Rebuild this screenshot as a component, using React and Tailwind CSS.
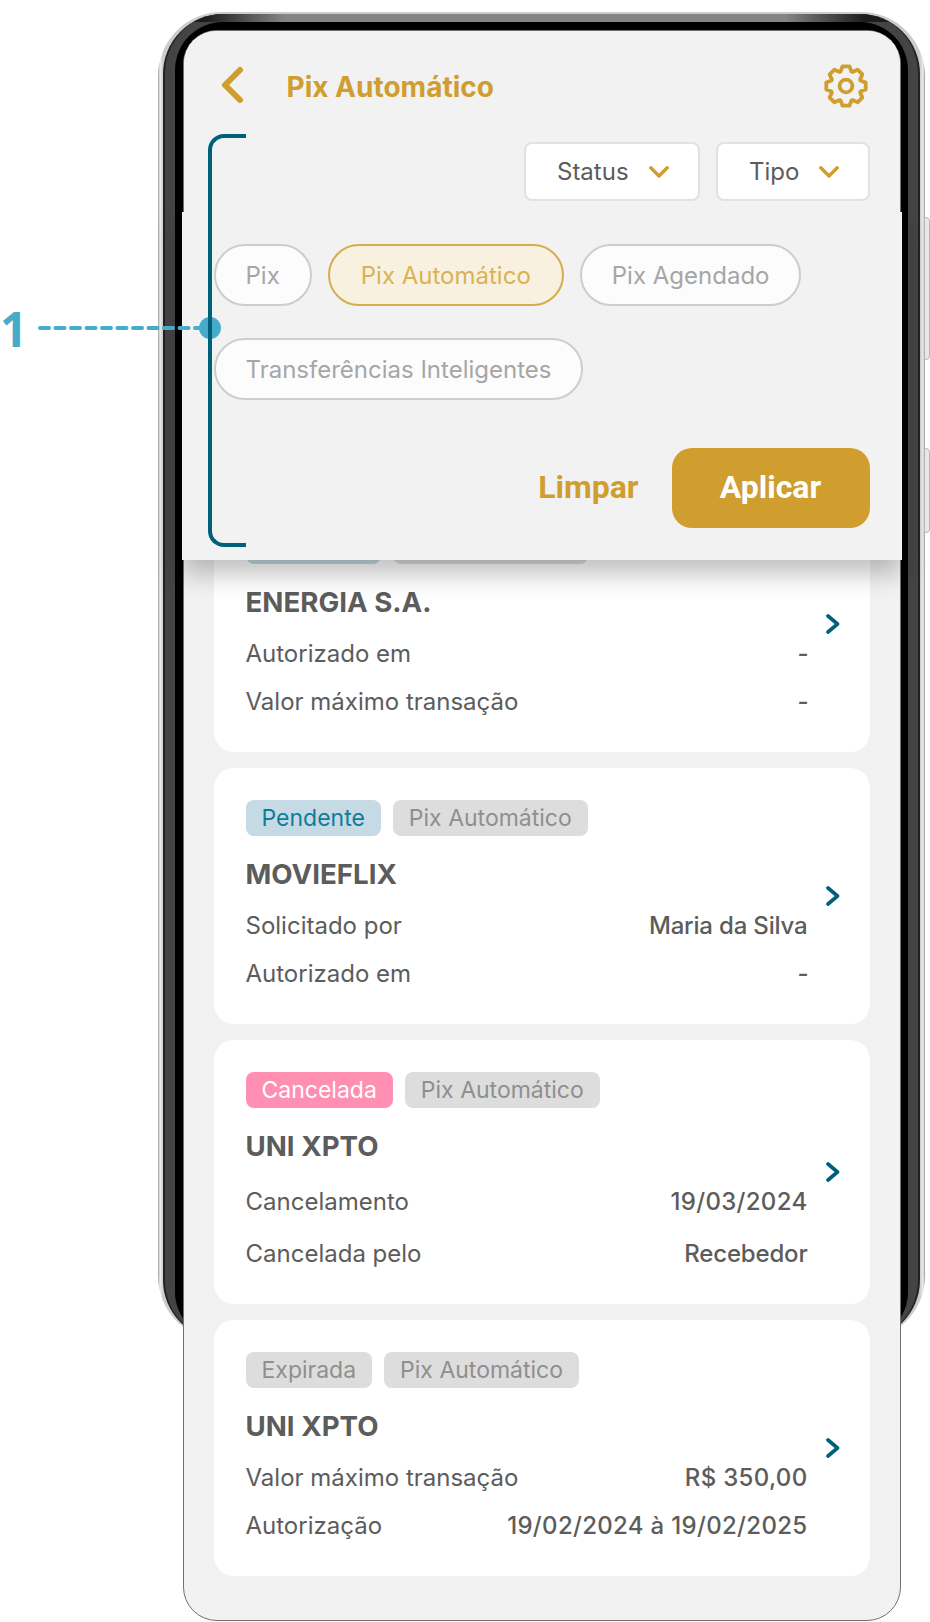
const gold = '#CF9E2E';

// 8 tooth gear outline, drawn around 22,22 in a 44 box
const gearPoints = () => {
  const pts = [];
  for (let i = 0; i < 8; i++) {
    const a = (i * Math.PI) / 4 - Math.PI / 2;
    [[-0.36, 15.5], [-0.17, 20], [0.17, 20], [0.36, 15.5]].forEach(([d, r]) => {
      pts.push(`${(22 + r * Math.cos(a + d)).toFixed(2)},${(22 + r * Math.sin(a + d)).toFixed(2)}`);
    });
  }
  return pts.join(' ');
};

function Gear() {
  return (
    <svg width="44" height="44" viewBox="0 0 44 44" fill="none" stroke={gold} strokeWidth="3.8" strokeLinejoin="round">
      <polygon points={gearPoints()} />
      <circle cx="22" cy="22" r="6.4" />
    </svg>
  );
}

function DownChevron() {
  return (
    <svg width="20" height="12" viewBox="0 0 20 12" fill="none" stroke={gold} strokeWidth="3.4" strokeLinecap="round" strokeLinejoin="round">
      <path d="M1.8 1.8L10 10L18.2 1.8" />
    </svg>
  );
}

function RightChevron() {
  return (
    <svg className="shrink-0" width="14" height="20" viewBox="0 0 14 20" fill="none" stroke="#00607A" strokeWidth="3.6" strokeLinecap="round" strokeLinejoin="round">
      <path d="M2 2L11.5 10L2 18" />
    </svg>
  );
}

function FilterSelect({ label, className }) {
  return (
    <div className={`flex h-[59px] items-center gap-5 rounded-lg border-2 border-[#E2E2E2] bg-white pl-[31px] text-2xl text-[#5C5C5C] ${className}`}>
      <span>{label}</span>
      <DownChevron />
    </div>
  );
}

function Pill({ label, active }) {
  return (
    <div
      className={
        active
          ? 'flex h-[62px] items-center rounded-full border-2 border-[#D6AC50] bg-[#F9F1E0] px-[31px] pt-[3px] text-2xl text-[#D9B256]'
          : 'flex h-[62px] items-center rounded-full border-2 border-[#CDCDCD] bg-[#FCFCFC] px-[30px] pt-[3px] text-2xl text-[#A6A6A6]'
      }
    >
      {label}
    </div>
  );
}

function Badge({ label, className }) {
  return <span className={`flex h-9 items-center rounded-lg px-4 pt-[2px] text-[23px] ${className}`}>{label}</span>;
}

function Row({ label, value }) {
  // dates and amounts sit a little wider than names in the reference
  let valueClass = 'font-medium tracking-[-0.18px]';
  if (/\d/.test(value)) valueClass = 'font-medium tracking-[0.32px]';
  if (value === '-') valueClass = 'font-medium -mr-px';
  return (
    <div className="flex h-8 items-center justify-between text-2xl text-[#5C5C5C]">
      <span>{label}</span>
      <span className={valueClass}>{value}</span>
    </div>
  );
}

function Card({ badge, badgeClass, title, rows, tall }) {
  return (
    <div className={tall ? 'flex h-[264px] items-center rounded-[20px] bg-white pl-8 pr-[29px]' : 'flex h-[256px] items-center rounded-[20px] bg-white pl-8 pr-[29px]'}>
      <div className="flex h-full w-[562px] flex-col pt-8">
        <div className="flex gap-3">
          <Badge label={badge} className={badgeClass} />
          <Badge label="Pix Automático" className="bg-[#DDDDDD] text-[#8F8F8F]" />
        </div>
        <div className="mt-5 text-[27.7px] leading-9 font-bold text-[#5C5C5C]">{title}</div>
        <div className={tall ? 'mt-[22px] flex flex-col gap-5' : 'mt-[18px] flex flex-col gap-4'}>
          {rows.map((r) => (
            <Row key={r[0]} label={r[0]} value={r[1]} />
          ))}
        </div>
      </div>
      <div className="ml-[18px]">
        <RightChevron />
      </div>
    </div>
  );
}

export default function App() {
  return (
    <div className="relative h-[1622px] w-[930px] overflow-hidden bg-white font-[Inter,sans-serif]">
      {/* Phone body, the screen runs on past its bottom edge */}
      <div className="ml-[158px] mt-3 h-[1328px] w-[767px] rounded-[64px] bg-[linear-gradient(90deg,#999999_0,#EEEEEE_2px,#CCCCCC_5px,#CCCCCC_762px,#EEEEEE_765px,#999999_767px)] px-[5px] pt-[2px]">
        <div className="h-full rounded-[60px] border-x-2 border-[#222222] bg-[linear-gradient(90deg,#1C1C1C_40px,#858585_120px,#858585_620px,#1C1C1C_700px),linear-gradient(#444444,#444444)] bg-[length:100%_8px,100%_100%] bg-no-repeat px-[10px] pt-2">
          <div className="h-full rounded-[48px] bg-black px-2 pt-2">
            <div className="relative h-[1591px] w-[718px] rounded-[34px] border-[1.5px] border-[#707070] bg-[#F2F2F2]">
              {/* Title and selects */}
              <div className="relative z-20 h-[180.5px] rounded-t-[32px] bg-[#F2F2F2]">
                <div className="flex h-[111px] items-start justify-between pl-[36.5px] pr-8 pt-[33px]">
                  <div className="flex h-[42px] items-center">
                    <svg width="24" height="38" viewBox="0 0 24 38" fill="none" stroke={gold} strokeWidth="6" strokeLinecap="round" strokeLinejoin="round">
                      <path d="M19 4L4 19L19 34" />
                    </svg>
                    <span className="ml-[42px] pt-[3px] text-[28px] font-bold text-[#CF9E2E]">Pix Automático</span>
                  </div>
                  <Gear />
                </div>
                <div className="flex justify-end gap-4 pr-[30px]">
                  <FilterSelect label="Status" className="w-[176px]" />
                  <FilterSelect label="Tipo" className="w-[154px]" />
                </div>
              </div>

              {/* Filter panel */}
              <div className="relative z-10 -mx-[2px] h-[348px] bg-[#F2F2F2] pl-[31.5px] pr-[32.5px] pt-8 shadow-[0_14px_24px_rgba(0,0,0,0.25)]">
                <div className="flex flex-wrap gap-x-4 gap-y-8">
                  <Pill label="Pix" />
                  <Pill label="Pix Automático" active />
                  <Pill label="Pix Agendado" />
                  <Pill label="Transferências Inteligentes" />
                </div>
                <div className="mt-12 flex items-center justify-end gap-[33px] font-['Roboto',sans-serif] text-[32px] font-bold">
                  <span className="pb-[2px] text-[#CF9E2E]">Limpar</span>
                  <div className="flex h-20 w-[198px] items-center justify-center rounded-[20px] bg-[#CF9E2E] pb-[2px] text-white">Aplicar</div>
                </div>
              </div>

              {/* Authorisation list, first card slides under the panel */}
              <div className="-mt-16 flex flex-col gap-4 pl-[29.5px] pr-[30.5px]">
                <Card
                  badge="Pendente"
                  badgeClass="bg-[#C5DAE4] text-[#0F7C9C]"
                  title="ENERGIA S.A."
                  rows={[['Autorizado em', '-'], ['Valor máximo transação', '-']]}
                />
                <Card
                  badge="Pendente"
                  badgeClass="bg-[#C5DAE4] text-[#0F7C9C]"
                  title="MOVIEFLIX"
                  rows={[['Solicitado por', 'Maria da Silva'], ['Autorizado em', '-']]}
                />
                <Card
                  tall
                  badge="Cancelada"
                  badgeClass="bg-[#FF8FB3] text-white"
                  title="UNI XPTO"
                  rows={[['Cancelamento', '19/03/2024'], ['Cancelada pelo', 'Recebedor']]}
                />
                <Card
                  badge="Expirada"
                  badgeClass="bg-[#DDDDDD] text-[#8F8F8F]"
                  title="UNI XPTO"
                  rows={[['Valor máximo transação', 'R$ 350,00'], ['Autorização', '19/02/2024 à 19/02/2025']]}
                />
              </div>
            </div>
          </div>
        </div>
      </div>

      {/* Side keys */}
      <div className="absolute left-[924px] top-[217px] h-[143px] w-[6px] rounded-r border border-[#B8B8B8] bg-[#E8E8E8]" />
      <div className="absolute left-[924px] top-[448px] h-[85px] w-[6px] rounded-r border border-[#B8B8B8] bg-[#E8E8E8]" />

      {/* Callout */}
      <span className="absolute left-0 top-[296px] z-30 font-['Open_Sans',sans-serif] text-[48px] leading-[66px] font-bold text-[#47ACCA]">1</span>
      <svg className="absolute left-[36px] top-[320px] z-30" width="170" height="16" viewBox="0 0 170 16" fill="none">
        <line x1="4" y1="8" x2="168" y2="8" stroke="#47ACCA" strokeWidth="4" strokeLinecap="round" strokeDasharray="9 6.5" />
      </svg>
      <div className="absolute left-[199px] top-[317px] z-30 h-[22px] w-[22px] rounded-full bg-[#47ACCA]" />
      <div className="absolute left-[208px] top-[134px] z-30 h-[413px] w-[38px] rounded-l-[16px] border-y-4 border-l-4 border-[#00607A]" />
    </div>
  );
}
